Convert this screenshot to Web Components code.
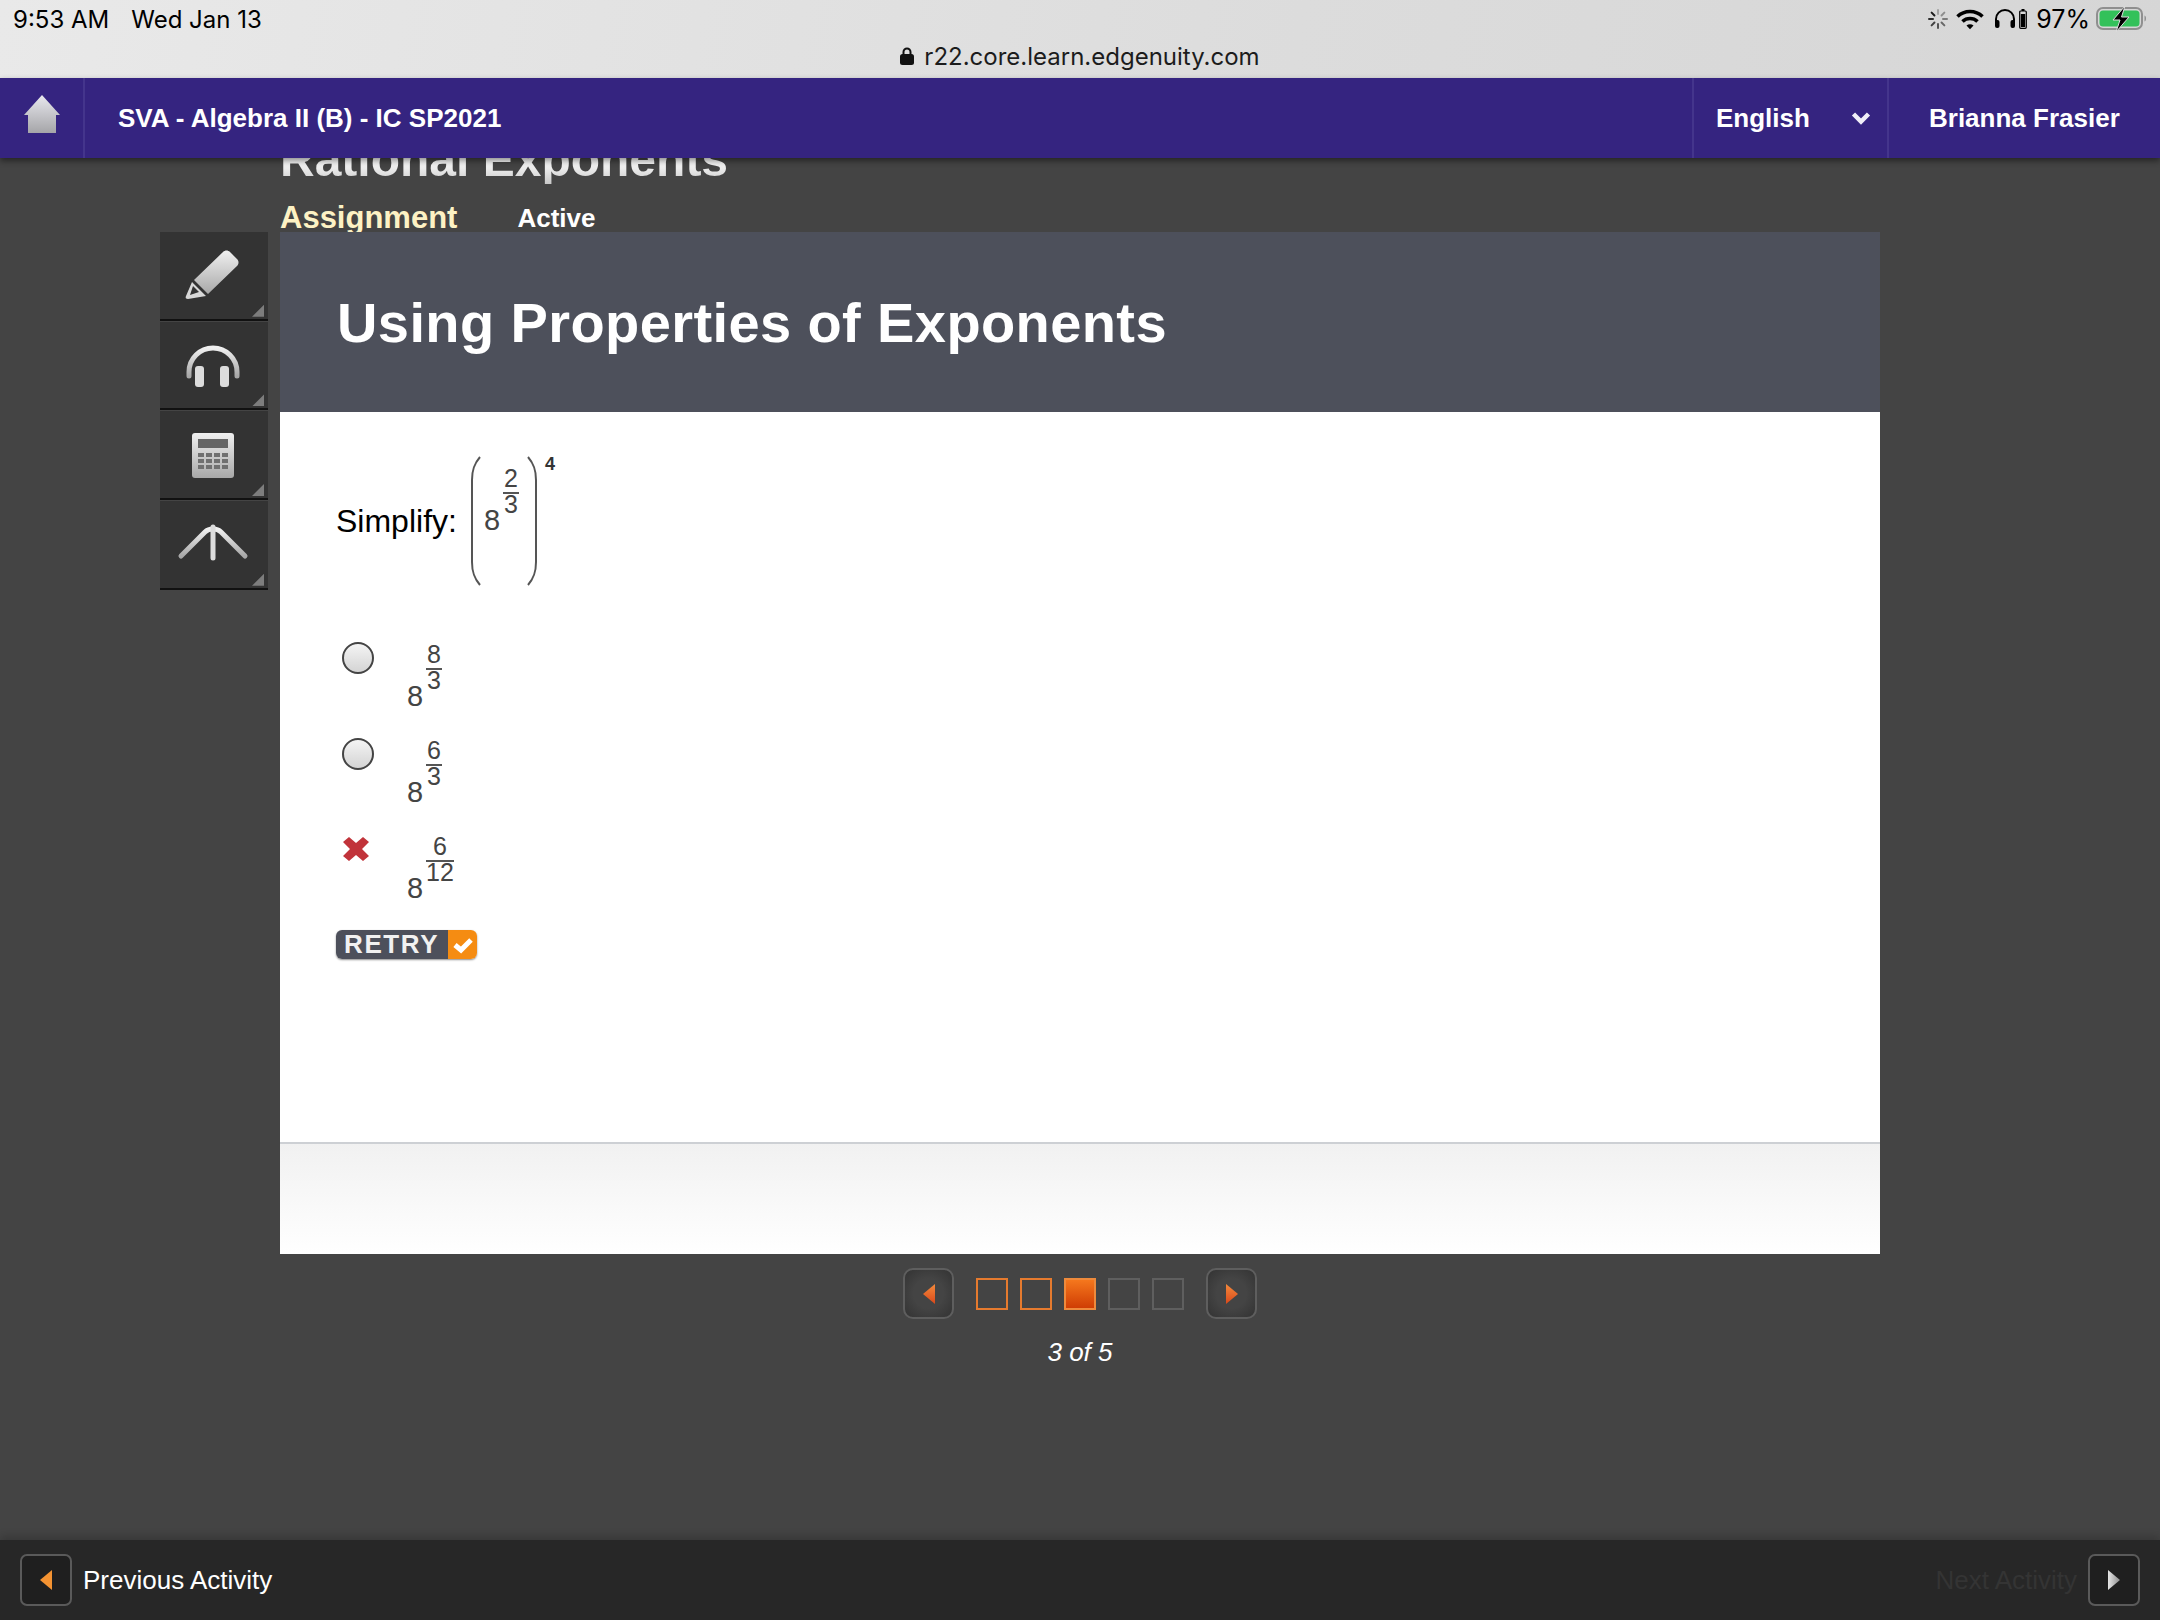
<!DOCTYPE html>
<html lang="en">
<head>
<meta charset="utf-8">
<title>Using Properties of Exponents</title>
<style>
  html, body { margin: 0; height: 100%; }
  body { background: #444; font-family: "Liberation Sans", Arial, sans-serif; overflow: hidden; }
  #page { display: flex; flex-direction: column; height: 1620px; }
</style>
</head>
<body>
<div id="page">
  <ios-status></ios-status>
  <course-nav></course-nav>
  <lesson-main>
    <tool-button slot="tools" kind="pencil"></tool-button>
    <tool-button slot="tools" kind="headphones"></tool-button>
    <tool-button slot="tools" kind="calculator"></tool-button>
    <tool-button slot="tools" kind="glossary"></tool-button>
    <question-card title="Using Properties of Exponents">
      <answer-option state="radio" num="8" den="3"></answer-option>
      <answer-option state="radio" num="6" den="3"></answer-option>
      <answer-option state="wrong" num="6" den="12"></answer-option>
    </question-card>
  </lesson-main>
  <activity-bar></activity-bar>
</div>

<script>
class IosStatus extends HTMLElement {
    constructor() {
        super();
        this.attachShadow({ mode: 'open' });
        let spokes = '';
        for (let i = 0; i < 8; i++) {
            const op = 0.25 + i * 0.09;
            spokes += `<rect x="9" y="0" width="2" height="6" rx="1" fill="#000" opacity="${op}" transform="rotate(${i * 45} 10 10)"/>`;
        }
        this.shadowRoot.innerHTML = `
            <style>
                :host {
                    display: grid;
                    grid-template-rows: 38px 40px;
                    height: 78px;
                    background: linear-gradient(100deg, #e9e9e9, #dcdcdc 60%, #d6d6d6);
                    color: #000;
                    font-family: Inter, "Liberation Sans", sans-serif;
                    position: relative;
                }
                .top { display: flex; align-items: center; justify-content: space-between; padding: 0 12px 0 13px; }
                .clock { display: flex; gap: 22px; font-size: 24px; }
                .icons { display: flex; align-items: center; font-size: 25px; }
                .url { display: flex; justify-content: center; align-items: center; gap: 10px; font-size: 24px; color: #1c1c1c; padding-bottom: 4px; }
                svg { display: block; }
            </style>
            <div class="top">
                <div class="clock"><span>9:53 AM</span><span>Wed Jan 13</span></div>
                <div class="icons">
                    <svg width="20" height="20" viewBox="0 0 20 20">${spokes}</svg>
                    <svg style="margin-left:8px" width="28" height="21" viewBox="0 0 28 21" fill="none" stroke="#000" stroke-width="3.6">
                        <path d="M1.5 7.5a18 18 0 0 1 25 0"/><path d="M6.5 12.5a11 11 0 0 1 15 0"/>
                        <path d="M10.5 16.6l3.5 3.6 3.5-3.6a5 5 0 0 0-7 0z" fill="#000" stroke="none"/>
                    </svg>
                    <svg style="margin-left:10px" width="22" height="20" viewBox="0 0 22 20" fill="none" stroke="#000">
                        <path d="M2 14V10a9 9 0 0 1 18 0v4" stroke-width="2"/>
                        <rect x="1" y="11" width="4.5" height="8" rx="2" fill="#000" stroke="none"/>
                        <rect x="16.500" y="11" width="4.5" height="8" rx="2" fill="#000" stroke="none"/>
                    </svg>
                    <svg style="margin-left:3px" width="8" height="20" viewBox="0 0 8 20">
                        <rect x="2.500" y="0" width="3" height="2" fill="#000"/>
                        <rect x=".7" y="2" width="6.600" height="17.300" rx="1" fill="none" stroke="#000" stroke-width="1.200"/>
                        <rect x="1.800" y="5" width="4.400" height="13" fill="#000"/>
                    </svg>
                    <span style="margin-left:9px">97%</span>
                    <svg style="margin-left:6px" width="52" height="26" viewBox="0 0 52 26">
                        <rect x="1" y="2" width="45" height="21" rx="6" fill="none" stroke="#8f8f8f" stroke-width="2"/>
                        <rect x="3.500" y="4.500" width="40" height="16" rx="3.500" fill="#33c15a"/>
                        <path d="M48.500 9.500c2 .5 2 5.500 0 6z" fill="#8f8f8f"/>
                        <path d="M29 0L17 14h7l-4 12 13-15h-7.500z" fill="#000" stroke="#dcdcdc" stroke-width="1"/>
                    </svg>
                </div>
            </div>
            <div class="url">
                <svg width="14" height="18" viewBox="0 0 14 18">
                    <path d="M3.500 8V5a3.500 3.500 0 0 1 7 0v3" fill="none" stroke="#111" stroke-width="2"/>
                    <rect x="0" y="7" width="14" height="11" rx="2.500" fill="#111"/>
                </svg>
                <span>r22.core.learn.edgenuity.com</span>
            </div>
        `;
    }
}

class CourseNav extends HTMLElement {
    constructor() {
        super();
        this.attachShadow({ mode: 'open' });
        this.shadowRoot.innerHTML = `
            <style>
                :host {
                    display: flex;
                    height: 80px;
                    background: #352480;
                    color: #fff;
                    font-size: 26px;
                    font-weight: 700;
                    box-shadow: 0 3px 6px rgba(0,0,0,.45);
                    position: relative;
                    z-index: 2;
                }
                div { display: flex; align-items: center; box-sizing: border-box; border-right: 2px solid #44358c; }
                .home { width: 85px; justify-content: center; padding-bottom: 6px; }
                .course { flex: 1; padding-left: 33px; }
                .lang { width: 195px; padding: 0 16px 0 22px; justify-content: space-between; }
                .user { flex: none; width: 271px; padding-left: 40px; border: none; }
            </style>
            <div class="home">
                <svg width="38" height="40" viewBox="0 0 38 40">
                    <defs><linearGradient id="h" x1="0" y1="0" x2="0" y2="1"><stop offset="0" stop-color="#e8e8ee"/><stop offset="1" stop-color="#a5a5a8"/></linearGradient></defs>
                    <path d="M19 0L37 20H33V38H5V20H1z" fill="url(#h)"/>
                </svg>
            </div>
            <div class="course">SVA - Algebra II (B) - IC SP2021</div>
            <div class="lang">
                <span>English</span>
                <svg width="20" height="14" viewBox="0 0 20 14"><path d="M2.500 3L10 10.500 17.500 3" fill="none" stroke="#f0eef8" stroke-width="4.500"/></svg>
            </div>
            <div class="user">Brianna Frasier</div>
        `;
    }
}

class ToolButton extends HTMLElement {
    constructor() {
        super();
        this.attachShadow({ mode: 'open' });
    }

    connectedCallback() {
        const kind = this.getAttribute('kind');
        const grad = `<defs><linearGradient id="g-${kind}" x1="0" y1="0" x2="0" y2="1"><stop offset="0" stop-color="#f0f0f0"/><stop offset="1" stop-color="#a8a8a8"/></linearGradient></defs>`;
        const paint = `url(#g-${kind})`;
        let art = '';
        if (kind === 'pencil') {
            art = `<path d="M63 20c2-2 5-2 7 0l7 7c2 2 2 5 0 7L48 62 34 48z" fill="${paint}"/>
                   <path d="M32 50L46 64 28 67c-2 0-3-1-2-3z" fill="#d8d8d8"/>
                   <path d="M33 54l6 6-9 3z" fill="#333"/>`;
        } else if (kind === 'headphones') {
            art = `<path d="M29 54V50a24 24 0 0 1 48 0v4" fill="none" stroke="${paint}" stroke-width="5" stroke-linecap="round"/>
                   <rect x="35" y="44" width="9" height="21" rx="3" fill="#dcdcdc"/>
                   <rect x="60" y="44" width="9" height="21" rx="3" fill="#dcdcdc"/>`;
        } else if (kind === 'calculator') {
            let keys = '';
            for (let r = 0; r < 3; r++) {
                for (let c = 0; c < 4; c++) {
                    keys += `<rect x="${38 + c * 8}" y="${42 + r * 6}" width="6" height="4" fill="#707070"/>`;
                }
            }
            art = `<rect x="32" y="22" width="42" height="45" rx="3" fill="${paint}"/>
                   <rect x="38" y="28" width="30" height="9" fill="#666"/>${keys}`;
        } else {
            art = `<path d="M21 55L45 31C49 27 57 27 61 31L85 55" fill="none" stroke="${paint}" stroke-width="5" stroke-linecap="round" stroke-linejoin="round"/>
                   <path d="M53 26V57" stroke="#dcdcdc" stroke-width="5" stroke-linecap="round"/>`;
        }
        this.shadowRoot.innerHTML = `
            <style>
                :host {
                    display: block;
                    box-sizing: border-box;
                    height: 88.7px;
                    margin-bottom: 1px;
                    background: #333;
                    border-bottom: 2px solid #111;
                    position: relative;
                }
                :host::after {
                    content: "";
                    position: absolute;
                    right: 4px;
                    bottom: 2px;
                    width: 12px;
                    height: 12px;
                    background: #7d7d7d;
                    clip-path: polygon(100% 0, 100% 100%, 0 100%);
                }
                svg { display: block; }
            </style>
            <svg width="108" height="86" viewBox="0 0 108 86">${grad}${art}</svg>
        `;
    }
}

class LessonMain extends HTMLElement {
    constructor() {
        super();
        this.attachShadow({ mode: 'open' });
        this.shadowRoot.innerHTML = `
            <style>
                :host {
                    display: block;
                    flex: 1;
                    min-height: 0;
                    overflow: hidden;
                    padding-left: 160px;
                }
                .head { height: 96px; padding-left: 120px; color: #fff; font-weight: 700; }
                h2 {
                    margin: -22px 0 0;
                    font-size: 48px;
                    line-height: 48px;
                    background: linear-gradient(#fff 50%, #c8c8c8);
                    -webkit-background-clip: text;
                    background-clip: text;
                    color: transparent;
                }
                .state { display: flex; align-items: center; height: 40px; margin-top: 14px; font-size: 26px; }
                .state b { color: #fdf2c4; font-size: 31px; margin-right: 60px; }
                .cols { display: flex; gap: 12px; align-items: flex-start; }
                .rail { width: 108px; }
            </style>
            <div class="head">
                <h2>Rational Exponents</h2>
                <div class="state"><b>Assignment</b><span>Active</span></div>
            </div>
            <div class="cols">
                <div class="rail"><slot name="tools"></slot></div>
                <div class="center"><slot></slot><lesson-pager></lesson-pager></div>
            </div>
        `;
    }
}

class MathPower extends HTMLElement {
    constructor() {
        super();
        this.attachShadow({ mode: 'open' });
    }

    connectedCallback() {
        this.shadowRoot.innerHTML = `
            <style>
                :host {
                    display: inline-flex;
                    align-items: flex-end;
                    color: #444;
                    font-family: "Liberation Sans", Arial, sans-serif;
                }
                .base { font-size: 29px; line-height: 22px; width: 16px; margin-right: 3px; }
                .frac { display: flex; flex-direction: column; align-items: center; font-size: 25px; line-height: 21px; margin-bottom: 17px; }
                .frac span { display: block; height: 20px; }
                .bar { align-self: stretch; min-width: 16px; height: 2px; margin-top: 4px; background: #555; }
            </style>
            <span class="base">8</span>
            <span class="frac">
                <span>${this.getAttribute('num')}</span>
                <i class="bar"></i>
                <span>${this.getAttribute('den')}</span>
            </span>
        `;
    }
}

class AnswerOption extends HTMLElement {
    constructor() {
        super();
        this.attachShadow({ mode: 'open' });
    }

    connectedCallback() {
        const wrong = this.getAttribute('state') === 'wrong';
        const mark = wrong
            ? `<svg width="28" height="26" viewBox="0 0 28 26" style="margin-top:2px"><path d="M7 1l7 6 7-6 6 5-7 7 7 7-6 5-7-6-7 6-6-5 7-7-7-7z" fill="#c1333a"/></svg>`
            : `<i class="radio"></i>`;
        this.shadowRoot.innerHTML = `
            <style>
                :host { display: flex; height: 66px; margin-bottom: 30px; }
                .mark { width: 65px; padding-left: 6px; box-sizing: content-box; }
                .radio {
                    display: block;
                    box-sizing: border-box;
                    width: 32px;
                    height: 32px;
                    border-radius: 50%;
                    border: 2px solid #444;
                    background: linear-gradient(#f4f4f4, #d4d4d4);
                }
                math-power { margin-top: 2px; align-self: flex-start; }
            </style>
            <div class="mark">${mark}</div>
            <math-power num="${this.getAttribute('num')}" den="${this.getAttribute('den')}"></math-power>
        `;
    }
}

class QuestionCard extends HTMLElement {
    constructor() {
        super();
        this.attachShadow({ mode: 'open' });
    }

    connectedCallback() {
        const paren = d => `<svg class="paren" width="10" height="130" viewBox="0 0 10 130"><path d="${d}" fill="none" stroke="#555" stroke-width="2"/></svg>`;
        this.shadowRoot.innerHTML = `
            <style>
                :host { display: block; width: 1600px; background: #fff; color: #000; }
                header {
                    display: flex;
                    align-items: center;
                    height: 180px;
                    padding: 0 56px 0 57px;
                    box-sizing: border-box;
                    background: #4d505b;
                    color: #fff;
                    font-size: 56px;
                    font-weight: 700;
                    letter-spacing: .4px;
                }
                .body { height: 730px; box-sizing: border-box; padding: 42px 56px 0; }
                .stem { display: flex; align-items: center; height: 134px; margin-bottom: 54px; font-size: 32px; }
                .stem > span { margin-right: 14px; }
                .paren { display: block; }
                .paren:first-of-type { margin-right: 3px; }
                .stem math-power { align-self: flex-start; margin-top: 14px; margin-right: 8px; }
                .exp { align-self: flex-start; margin: 2px 0 0 8px; font-size: 18px; font-weight: 700; line-height: 16px; color: #333; }
                retry-badge { margin-top: 6px; }
                footer { height: 112px; box-sizing: border-box; border-top: 2px solid #cdd0d4; background: linear-gradient(#f1f1f1, #fff); }
            </style>
            <header>${this.getAttribute('title')}</header>
            <div class="body">
                <div class="stem">
                    <span>Simplify:</span>
                    ${paren('M9 1C3 8 1 14 1 24V106C1 116 3 122 9 129')}
                    <math-power num="2" den="3"></math-power>
                    ${paren('M1 1C7 8 9 14 9 24V106C9 116 7 122 1 129')}
                    <span class="exp">4</span>
                </div>
                <slot></slot>
                <retry-badge></retry-badge>
            </div>
            <footer></footer>
        `;
    }
}

class RetryBadge extends HTMLElement {
    constructor() {
        super();
        this.attachShadow({ mode: 'open' });
        this.shadowRoot.innerHTML = `
            <style>
                :host {
                    display: flex;
                    width: 141px;
                    height: 29px;
                    border-radius: 6px;
                    overflow: hidden;
                    box-shadow: 0 1px 2px rgba(0,0,0,.45);
                    font-family: "Liberation Sans", Arial, sans-serif;
                }
                .word {
                    width: 112px;
                    padding-left: 8px;
                    box-sizing: border-box;
                    background: #4d505b;
                    color: #f1f1f1;
                    font-size: 26px;
                    font-weight: 700;
                    line-height: 29px;
                    letter-spacing: 1.600px;
                }
                .tick { flex: 1; display: flex; align-items: center; justify-content: center; background: #f58c12; }
            </style>
            <span class="word">RETRY</span>
            <span class="tick"><svg width="22" height="18" viewBox="0 0 22 18"><path d="M3 9l6 5L19 4" fill="none" stroke="#fff" stroke-width="5"/></svg></span>
        `;
    }
}

class LessonPager extends HTMLElement {
    constructor() {
        super();
        this.attachShadow({ mode: 'open' });
        const arrow = left => `<svg width="12" height="20" viewBox="0 0 12 20"><defs><linearGradient id="a${left ? 'l' : 'r'}" x1="0" y1="0" x2="0" y2="1"><stop offset="0" stop-color="#f48a3c"/><stop offset="1" stop-color="#d9481a"/></linearGradient></defs><path d="${left ? 'M12 0V20L0 10z' : 'M0 0V20L12 10z'}" fill="url(#a${left ? 'l' : 'r'})"/></svg>`;
        this.shadowRoot.innerHTML = `
            <style>
                :host { display: flex; flex-direction: column; align-items: center; width: 1600px; padding-top: 14px; color: #fff; }
                .row { display: flex; align-items: center; }
                .btn {
                    display: flex;
                    align-items: center;
                    justify-content: center;
                    box-sizing: border-box;
                    width: 51px;
                    height: 51px;
                    border: 2px solid #5e5e5e;
                    border-radius: 10px;
                    background: radial-gradient(#444 45%, #333);
                }
                .dots { display: flex; gap: 12px; margin: 0 22px; }
                .dots i { display: block; box-sizing: border-box; width: 32px; height: 32px; border: 2px solid #5f5f5f; }
                .dots i.seen { border-color: #e57a2e; }
                .dots i.on { border-color: #ee8a3c; background: linear-gradient(#f5771d, #cf3d04); }
                .label { margin-top: 18px; font-size: 26px; font-style: italic; line-height: 30px; }
            </style>
            <div class="row">
                <div class="btn">${arrow(true)}</div>
                <div class="dots"><i class="seen"></i><i class="seen"></i><i class="on"></i><i></i><i></i></div>
                <div class="btn">${arrow(false)}</div>
            </div>
            <div class="label">3 of 5</div>
        `;
    }
}

class ActivityBar extends HTMLElement {
    constructor() {
        super();
        this.attachShadow({ mode: 'open' });
        this.shadowRoot.innerHTML = `
            <style>
                :host {
                    display: flex;
                    align-items: center;
                    justify-content: space-between;
                    height: 80px;
                    padding: 0 20px;
                    background: #272727;
                    box-shadow: 0 -4px 8px rgba(0,0,0,.18);
                    font-size: 26px;
                    color: #fff;
                }
                .side { display: flex; align-items: center; gap: 11px; }
                .btn {
                    display: flex;
                    align-items: center;
                    justify-content: center;
                    box-sizing: border-box;
                    width: 52px;
                    height: 52px;
                    border: 2px solid #5a5a5a;
                    border-radius: 7px;
                    background: #1f1f1f;
                }
                .off { color: #343434; }
            </style>
            <div class="side">
                <div class="btn"><svg width="12" height="20" viewBox="0 0 12 20"><path d="M12 0V20L0 10z" fill="#f49332"/></svg></div>
                <span>Previous Activity</span>
            </div>
            <div class="side">
                <span class="off">Next Activity</span>
                <div class="btn"><svg width="12" height="20" viewBox="0 0 12 20"><defs><linearGradient id="n" x1="0" y1="0" x2="1" y2="0"><stop offset="0" stop-color="#e6e6e6"/><stop offset="1" stop-color="#8c8c8c"/></linearGradient></defs><path d="M0 0V20L12 10z" fill="url(#n)"/></svg></div>
            </div>
        `;
    }
}

customElements.define('ios-status', IosStatus);
customElements.define('course-nav', CourseNav);
customElements.define('tool-button', ToolButton);
customElements.define('lesson-main', LessonMain);
customElements.define('math-power', MathPower);
customElements.define('answer-option', AnswerOption);
customElements.define('question-card', QuestionCard);
customElements.define('retry-badge', RetryBadge);
customElements.define('lesson-pager', LessonPager);
customElements.define('activity-bar', ActivityBar);
</script>
</body>
</html>
